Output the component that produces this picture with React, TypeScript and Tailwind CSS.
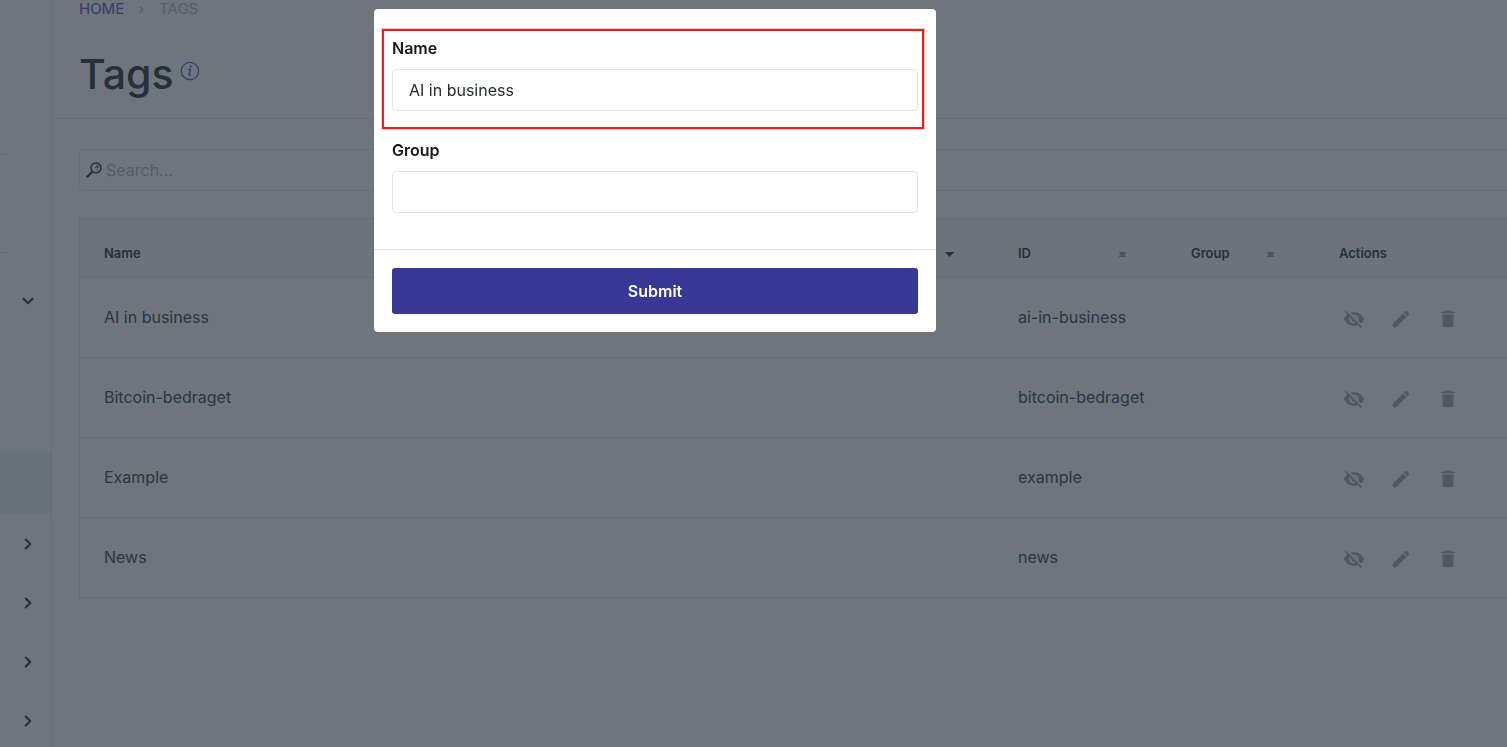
import { ChevronDown, ChevronRight } from "lucide-react";
import { MdDelete, MdEdit, MdVisibilityOff } from "react-icons/md";

const tags = [
  { name: "AI in business", id: "ai-in-business" },
  { name: "Bitcoin-bedraget", id: "bitcoin-bedraget" },
  { name: "Example", id: "example" },
  { name: "News", id: "news" },
];

function SearchIcon() {
  return (
    <svg viewBox="0 0 16 16" className="size-4 shrink-0 text-[#272f38]" fill="none" stroke="currentColor" aria-hidden="true">
      <circle cx="10" cy="6" r="5" strokeWidth="1.5" />
      <path d="M6.3 9.7 0.8 15.2" strokeWidth="2" />
      <path d="M10.2 3.6q2 .3 2.2 2.2M11.3 7.4v1.2M10 5v1" strokeWidth="1.1" />
    </svg>
  );
}

function InfoIcon() {
  return (
    <svg viewBox="0 0 20 20" className="size-5" aria-hidden="true">
      <circle cx="10" cy="10" r="8.7" fill="none" stroke="#353a68" strokeWidth="1.2" />
      <circle cx="10.7" cy="5.7" r="1.1" fill="#353a68" />
      <path d="M8.2 8.4h2.2L9.2 13.6q-.1 1 1.7.3" fill="none" stroke="#353a68" strokeWidth="1.3" />
    </svg>
  );
}

function SortIcon({ active = false }: { active?: boolean }) {
  return active ? (
    <svg viewBox="0 0 9 5" className="h-[5px] w-[9px]" aria-hidden="true">
      <path d="M0 0h9L4.5 5z" fill="#272f38" />
    </svg>
  ) : (
    <svg viewBox="0 0 9 5" className="h-[5px] w-[9px]" aria-hidden="true">
      <path d="M0.5 0h8L4.5 5z" fill="#4d555e" />
      <path d="M0.5 5h8L4.5 0z" fill="#4d555e" />
    </svg>
  );
}

function HeaderCell({ label, sort }: { label: string; sort: "active" | "idle" }) {
  return (
    <th className="pt-3 pr-10 pl-6 font-semibold">
      <button className="flex w-full items-center justify-between">
        {label}
        <SortIcon active={sort === "active"} />
      </button>
    </th>
  );
}

function Sidebar() {
  return (
    <nav aria-label="Main menu" className="flex w-[52px] shrink-0 flex-col border-r border-[#656d75]">
      <div className="h-[155px] w-2 shrink-0 border-b border-[#626c7a]" />
      <div className="h-[98px] w-2 shrink-0 border-b border-[#626c7a]" />
      <button aria-label="Collapse section" className="mt-[18px] flex h-[59px] shrink-0 items-center justify-center pl-1">
        <ChevronDown strokeWidth={2.75} className="size-[18px] text-[#272f38]" />
      </button>
      <div className="h-[122px] shrink-0" />
      <div className="h-[62px] shrink-0 bg-[#69717b]" />
      {["Section 1", "Section 2", "Section 3", "Section 4"].map((section) => (
        <button key={section} aria-label={section} className="flex h-[59px] shrink-0 items-center justify-center pl-1">
          <ChevronRight strokeWidth={2.75} className="size-[18px] text-[#272f38]" />
        </button>
      ))}
    </nav>
  );
}

function Field({ id, label, value }: { id: string; label: string; value?: string }) {
  return (
    <div>
      <label htmlFor={id} className="block text-base leading-6 font-semibold text-[#16181b]">
        {label}
      </label>
      <input
        id={id}
        defaultValue={value}
        className="mt-[9px] block h-[42px] w-full rounded border border-[#e3e5e8] px-4 text-base text-[#272b30] outline-none"
      />
    </div>
  );
}

function TagDialog() {
  return (
    <div className="fixed inset-0 flex items-start justify-center pt-[9px] pr-[197px]">
      <form
        role="dialog"
        aria-label="Edit tag"
        onSubmit={(event) => event.preventDefault()}
        className="w-full max-w-[562px] rounded bg-white"
      >
        <div className="pt-5 pr-3 pl-2">
          <div className="h-[100px] border-2 border-[#e81f20] pt-[5px] pr-1 pl-2 ring-1 ring-[#e81f20]/25">
            <Field id="tag-name" label="Name" value="AI in business" />
          </div>
        </div>
        <div className="px-[18px] pt-[9px] pb-9">
          <Field id="tag-group" label="Group" />
        </div>
        <div className="border-t border-[#dfe1e4] p-[18px]">
          <button className="h-[46px] w-full rounded-[3px] bg-[#383697] text-base font-semibold text-white">Submit</button>
        </div>
      </form>
    </div>
  );
}

export default function App() {
  return (
    <div className="flex h-screen overflow-hidden bg-[#6e757c] font-['Inter',sans-serif] text-[#272f38]">
      <Sidebar />
      <main className="min-w-0 flex-1">
        <header className="h-[119px] border-b border-[#656d75] pl-[27px]">
          <div className="flex h-[18px] items-center gap-3 text-[15px]">
            <a href="#home" className="text-[#353a68]">HOME</a>
            <ChevronRight strokeWidth={3} className="size-[11px] text-[#575f68]" />
            <span className="text-[#575f68]">TAGS</span>
          </div>
          <div className="flex items-start gap-[6px] pt-[31px]">
            <h1 className="text-[41px] leading-[50px] font-medium">Tags</h1>
            <button aria-label="About tags" className="mt-3">
              <InfoIcon />
            </button>
          </div>
        </header>
        <div className="pt-[30px] pl-[27px]">
          <label className="flex h-[42px] items-center gap-1 rounded-l border border-r-0 border-[#656d75] pl-1.5">
            <SearchIcon />
            <input
              aria-label="Search tags"
              placeholder="Search..."
              className="min-w-0 flex-1 bg-transparent text-base outline-none placeholder:text-[#555d66]"
            />
          </label>
          <table className="mt-[27px] w-full table-fixed border-collapse border-y border-l border-[#656d75] text-left">
            <colgroup>
              <col />
              <col className="w-[173px]" />
              <col className="w-[148px]" />
              <col className="w-[192px]" />
            </colgroup>
            <thead className="bg-[#6c737b]">
              <tr className="h-[59px] text-[13px]">
                <HeaderCell label="Name" sort="active" />
                <HeaderCell label="ID" sort="idle" />
                <HeaderCell label="Group" sort="idle" />
                <th className="pt-3 pl-6 font-semibold">Actions</th>
              </tr>
            </thead>
            <tbody>
              {tags.map((tag) => (
                <tr key={tag.id} className="h-20 border-t border-[#656d75] text-base text-[#2b3541]">
                  <td className="pb-0.5 pl-6">{tag.name}</td>
                  <td className="pb-0.5 pl-6 whitespace-nowrap">{tag.id}</td>
                  <td />
                  <td className="pt-0.5 pl-7">
                    <div className="flex gap-[25px] text-[22px] text-[#4d5864]">
                      <button aria-label={`Hide ${tag.name}`}><MdVisibilityOff /></button>
                      <button aria-label={`Edit ${tag.name}`}><MdEdit /></button>
                      <button aria-label={`Delete ${tag.name}`}><MdDelete /></button>
                    </div>
                  </td>
                </tr>
              ))}
            </tbody>
          </table>
        </div>
      </main>
      <TagDialog />
    </div>
  );
}
